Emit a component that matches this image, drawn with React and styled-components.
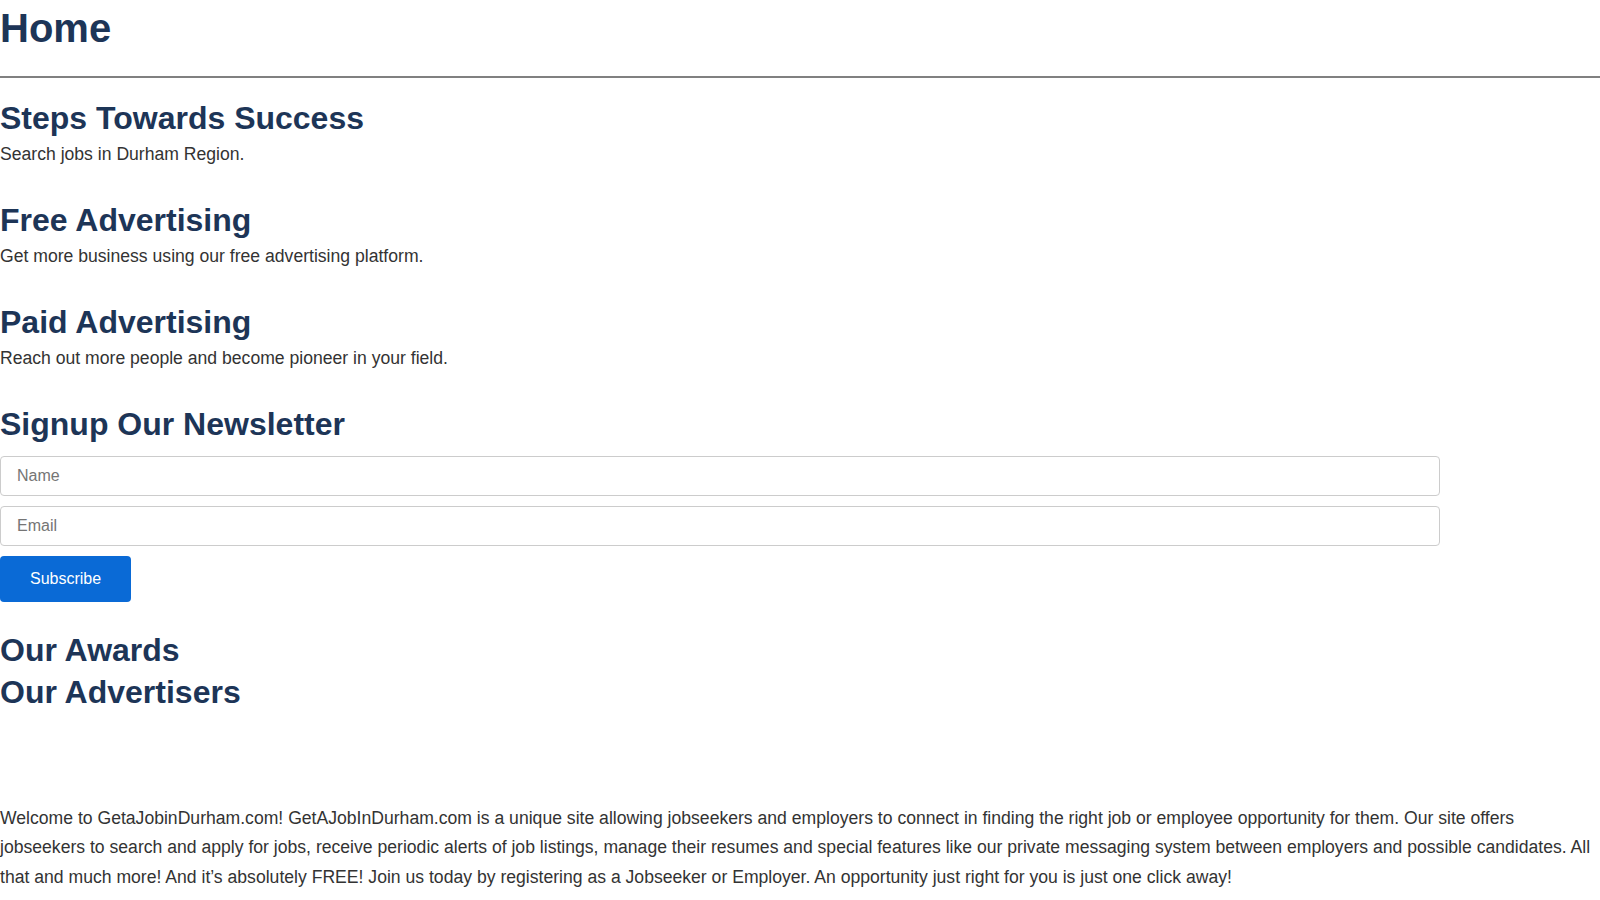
import React from "react"
import styled, { createGlobalStyle } from "styled-components"

const GlobalStyle = createGlobalStyle`
body {
  margin: 0;
  background: #fff;
  font-family: "Liberation Sans", Arial, sans-serif;
  color: #333;
}
`

const sections = [
    { title: "Steps Towards Success", text: "Search jobs in Durham Region." },
    { title: "Free Advertising", text: "Get more business using our free advertising platform." },
    { title: "Paid Advertising", text: "Reach out more people and become pioneer in your field." },
]

const App = () => {
    return (
        <Page>
            <GlobalStyle />
            <Title>Home</Title>
            <Rule />
            <Main>
                {sections.map((s) => (
                    <Section key={s.title}>
                        <Heading>{s.title}</Heading>
                        <Text>{s.text}</Text>
                    </Section>
                ))}
                <Newsletter>
                    <Heading>Signup Our Newsletter</Heading>
                    <Form onSubmit={(e) => e.preventDefault()}>
                        <Input type="text" placeholder="Name" />
                        <Input type="email" placeholder="Email" />
                        <Button type="submit">Subscribe</Button>
                    </Form>
                </Newsletter>
                <Lists>
                    <Heading>Our Awards</Heading>
                    <Heading>Our Advertisers</Heading>
                </Lists>
                <About>
                    Welcome to GetaJobinDurham.com! GetAJobInDurham.com is a unique site allowing jobseekers and
                    employers to connect in finding the right job or employee opportunity for them. Our site offers
                    jobseekers to search and apply for jobs, receive periodic alerts of job listings, manage their
                    resumes and special features like our private messaging system between employers and possible
                    candidates. All that and much more! And it’s absolutely FREE! Join us today by registering as a
                    Jobseeker or Employer. An opportunity just right for you is just one click away!
                </About>
            </Main>
        </Page>
    )
}
export default App

const Page = styled.div`
width: 100%;
display: flex;
flex-direction: column;
`
const Title = styled.h1`
margin: 0;
font-size: 40px;
line-height: 56px;
font-weight: bold;
color: #1d3557;
`
const Rule = styled.hr`
margin: 20px 0 0;
border: none;
border-top: 2px solid #808080;
height: 0;
`
const Main = styled.main`
display: flex;
flex-direction: column;
padding-top: 20px;
`
const Section = styled.section`
display: flex;
flex-direction: column;
gap: 3px;
margin-bottom: 32px;
`
const Heading = styled.h2`
margin: 0;
font-size: 32px;
line-height: 40px;
font-weight: bold;
color: #1d3557;
`
const Text = styled.p`
margin: 0;
font-size: 17.6px;
line-height: 27px;
color: #333;
`
const Newsletter = styled.section`
display: flex;
flex-direction: column;
gap: 12px;
`
const Form = styled.form`
display: flex;
flex-direction: column;
align-items: flex-start;
gap: 10px;
`
const Input = styled.input`
box-sizing: border-box;
width: 90%;
height: 40px;
padding: 0 16px;
border: 1px solid #ccc;
border-radius: 4px;
font-family: "Liberation Sans", Arial, sans-serif;
font-size: 16px;
color: #333;
outline: none;
::placeholder {
    color: #9ca3af;
}
`
const Button = styled.button`
height: 46px;
padding: 0 30px;
border: none;
border-radius: 4px;
background-color: #0a6ad6;
color: #fff;
font-family: "Liberation Sans", Arial, sans-serif;
font-size: 16px;
cursor: pointer;
`
const Lists = styled.section`
display: flex;
flex-direction: column;
gap: 2px;
margin-top: 28px;
`
const About = styled.p`
margin: 92px 0 0;
font-size: 17.6px;
line-height: 29.4px;
color: #333;
`
